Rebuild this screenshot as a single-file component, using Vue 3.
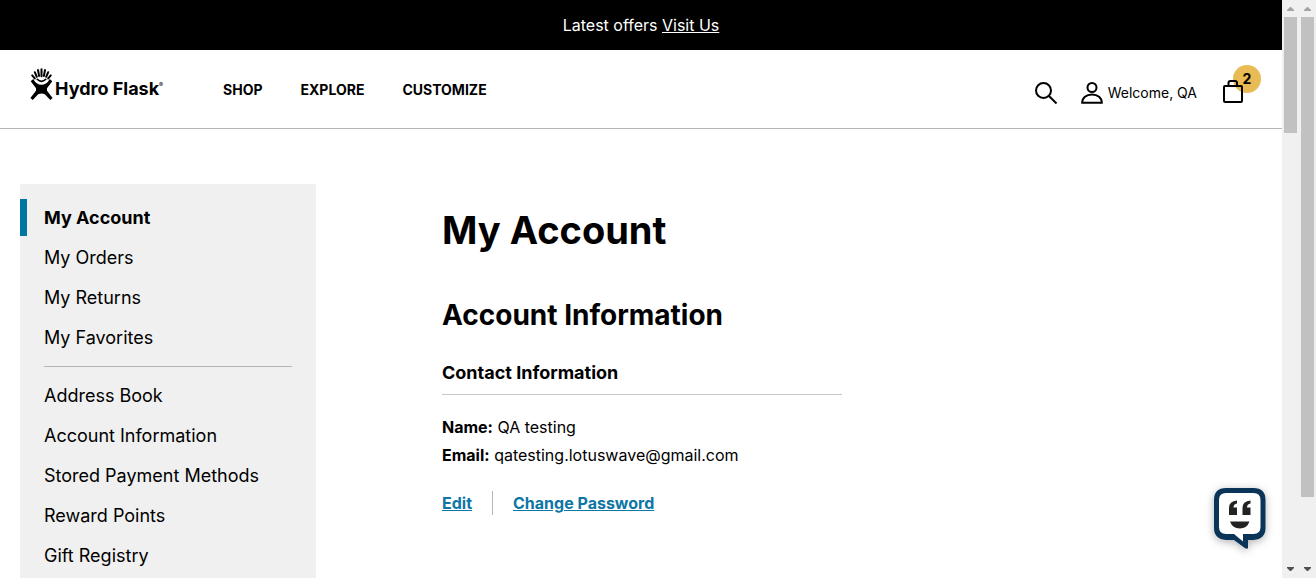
<script setup>
const nav = ['Shop', 'Explore', 'Customize']
const accountLinks = ['My Account', 'My Orders', 'My Returns', 'My Favorites']
const settingLinks = ['Address Book', 'Account Information', 'Stored Payment Methods', 'Reward Points', 'Gift Registry']
const bars = ['inner', 'outer']
</script>

<template>
  <div class="window">
    <div class="page">
      <p class="promo">Latest offers <a href="#">Visit Us</a></p>

      <header class="header">
        <a class="logo" href="#" aria-label="Hydro Flask">
          <svg width="23" height="33" viewBox="0 0 23 33" aria-hidden="true">
            <g fill="none" stroke="#000" stroke-linecap="round">
              <path stroke-width="2" d="M11.500 1.200v7M8 2l1.100 6M15 2l-1.100 6M4.800 4.200l2 4.600M18.200 4.200l-2 4.600M2.200 7.400l2.600 3M20.800 7.400l-2.600 3" />
              <path stroke-width="1.600" d="M7.200 11.300q4.300 4.200 8.600 0" />
            </g>
            <path d="M3.300 11Q6.200 16.800 11.500 16.800T19.700 11L22.300 13.200 17 20.200v2.600L22.600 30 20.300 32 14.800 26.200Q11.500 24.800 8.200 26.200L2.700 32 .4 30 6 22.800v-2.600L.7 13.200z" />
          </svg>
          <span class="wordmark">Hydro Flask</span><span class="reg">®</span>
        </a>
        <nav class="nav" aria-label="Main">
          <a v-for="n in nav" :key="n" href="#">{{ n }}</a>
        </nav>
        <div class="tools">
          <button class="search" type="button" aria-label="Search">
            <svg width="24" height="24" viewBox="0 0 24 24" fill="none" stroke="#000" stroke-width="2">
              <circle cx="9.500" cy="9.500" r="7.500" />
              <path d="M15 15l7.500 7.500" />
            </svg>
          </button>
          <a class="user" href="#">
            <svg width="22" height="22" viewBox="0 0 22 22" fill="none" stroke="#000" stroke-width="2" aria-hidden="true">
              <circle cx="11" cy="5.500" r="4.500" />
              <path d="M1.200 20.800c0-5 4-8.300 9.800-8.300s9.800 3.300 9.800 8.300z" />
            </svg>
            <span>Welcome, QA</span>
          </a>
          <a class="cart" href="#" aria-label="Cart, 2 items">
            <span class="badge">2</span>
            <svg width="20" height="23" viewBox="0 0 20 23" fill="none" stroke="#000" stroke-width="2" aria-hidden="true">
              <rect x="1" y="6" width="18" height="16" rx="1" />
              <path d="M5.500 6V3q0-2 2-2h4.500q2 0 2 2v3" />
            </svg>
          </a>
        </div>
      </header>

      <div class="body">
        <aside class="sidebar">
          <ul>
            <li v-for="(l, i) in accountLinks" :key="l" :class="{ current: i === 0 }"><a href="#">{{ l }}</a></li>
          </ul>
          <hr />
          <ul>
            <li v-for="l in settingLinks" :key="l"><a href="#">{{ l }}</a></li>
          </ul>
        </aside>

        <main class="main">
          <h1>My Account</h1>
          <h2>Account Information</h2>
          <section class="contact">
            <h3>Contact Information</h3>
            <p><strong>Name:</strong> QA testing</p>
            <p><strong>Email:</strong> qatesting.lotuswave@gmail.com</p>
            <div class="actions">
              <a href="#">Edit</a>
              <a href="#">Change Password</a>
            </div>
          </section>
        </main>
      </div>
    </div>

    <div v-for="b in bars" :key="b" class="scrollbar" :class="b" aria-hidden="true">
      <svg width="17" height="17" viewBox="0 0 17 17"><path fill="#a3a3a3" d="M5 11v-1l3-3h1l3 3v1z" /></svg>
      <div class="track"><div class="thumb"></div></div>
      <svg width="17" height="17" viewBox="0 0 17 17"><path fill="#505050" d="M5 6v1l3 3h1l3-3V6z" /></svg>
    </div>

    <button class="chat" type="button" aria-label="Open chat">
      <svg width="52" height="61" viewBox="0 0 52 61">
        <path fill="#0b3558" d="M12 0h27.500q12 0 12 12v28q0 11-12 12H34v8.500h-2.500L20 52h-8Q0 51 0 40V12Q0 0 12 0z" />
        <path fill="#fff" d="M12 5h27.500q7 0 7 7v27q0 7-7 7H29v7.500L20 46h-8q-7 0-7-7V12q0-7 7-7z" />
        <path fill="#222" d="M23 12.500v3q-3.500.5-3.500 4H23V27h-8v-7q0-7 8-7.500zM36.500 12.500v3q-3.500.5-3.500 4h3.500V27h-8v-7q0-7 8-7.500zM16 33.500h19.500q-2.500 7-9.700 7t-9.800-7z" />
      </svg>
    </button>
  </div>
</template>

<style>
body {
  margin: 0;
  overflow: hidden;
}
</style>

<style scoped>
.window {
  display: flex;
  height: 100vh;
  position: relative;
  background: #fff;
  color: #000;
  font-family: Inter, "Open Sans", sans-serif;
  font-size: 16px;
}
.page {
  flex: 1;
  min-width: 0;
  overflow: hidden;
}
a {
  color: inherit;
  text-decoration: none;
}
button {
  display: flex;
  padding: 0;
  border: 0;
  background: none;
}
svg {
  display: block;
  flex: none;
}
h1, h2, h3, p, ul {
  margin: 0;
  padding: 0;
}
.promo {
  background: #000;
  color: #fff;
  text-align: center;
  line-height: 50px;
}
.promo a {
  text-decoration: underline;
}
.header {
  display: flex;
  align-items: center;
  height: 78px;
  padding: 0 21px 0 30px;
  border-bottom: 1px solid #b5b5b5;
}
.logo {
  display: flex;
  align-items: center;
  width: 193px;
  padding-bottom: 10px;
}
.wordmark {
  margin: 10px 0 0 2px;
  font-size: 18px;
  font-weight: 700;
  line-height: 24px;
  white-space: nowrap;
}
.reg {
  font-size: 6px;
}
.nav {
  display: flex;
  flex: 1;
  gap: 38px;
  font-size: 14px;
  font-weight: 700;
  text-transform: uppercase;
}
.tools {
  display: flex;
  align-items: center;
  padding-top: 8px;
}
.search {
  margin-right: 23px;
}
.user {
  display: flex;
  align-items: center;
  gap: 5px;
  margin-right: 26px;
  font-size: 14px;
}
.user span {
  padding-bottom: 2px;
}
.cart {
  position: relative;
  width: 38px;
}
.cart svg {
  position: relative;
  margin-bottom: 4px;
}
.badge {
  position: absolute;
  left: 10px;
  top: -15px;
  width: 28px;
  border-radius: 50%;
  background: #e8bb55;
  text-align: center;
  font-size: 14px;
  font-weight: 700;
  line-height: 28px;
}
.body {
  display: flex;
  gap: 126px;
  padding: 55px 20px 0;
}
.sidebar {
  flex: none;
  width: 296px;
  padding: 15px 0 24px;
  box-sizing: border-box;
  background: #f0f0f0;
  font-size: 18px;
}
.sidebar ul {
  list-style: none;
}
.sidebar li {
  margin-bottom: 3px;
  padding-left: 24px;
  line-height: 37px;
}
.sidebar .current {
  padding-left: 17px;
  border-left: 7px solid #0076a3;
  font-weight: 700;
}
.sidebar hr {
  height: 1px;
  margin: 10px 24px;
  border: 0;
  background: #b5b5b5;
}
.main {
  flex: 1;
  padding-top: 22px;
}
h1 {
  font-size: 38px;
  line-height: 48px;
}
h2 {
  margin-top: 43px;
  font-size: 28px;
  line-height: 36px;
}
.contact {
  max-width: 400px;
  line-height: 28px;
}
h3 {
  margin: 28px 0 18px;
  padding-bottom: 9px;
  border-bottom: 1px solid #c5c5ce;
  font-size: 18px;
  line-height: 24px;
}
.actions {
  display: flex;
  margin-top: 22px;
  color: #0d76a5;
  font-weight: 700;
  line-height: 24px;
}
.actions a {
  text-decoration: underline;
}
.actions a + a {
  margin-left: 20px;
  padding-left: 20px;
  border-left: 1px solid #b5b5b5;
}
.scrollbar {
  display: flex;
  flex-direction: column;
  width: 17px;
  background: #f0f0f0;
}
.track {
  flex: 1;
  padding: 0 2px;
}
.thumb {
  height: 21.3%;
  background: #c1c1c1;
}
.outer .thumb {
  height: 88.2%;
}
.chat {
  position: absolute;
  right: 50px;
  bottom: 29px;
  filter: drop-shadow(0 2px 4px rgba(0, 0, 0, 0.3));
}
</style>
